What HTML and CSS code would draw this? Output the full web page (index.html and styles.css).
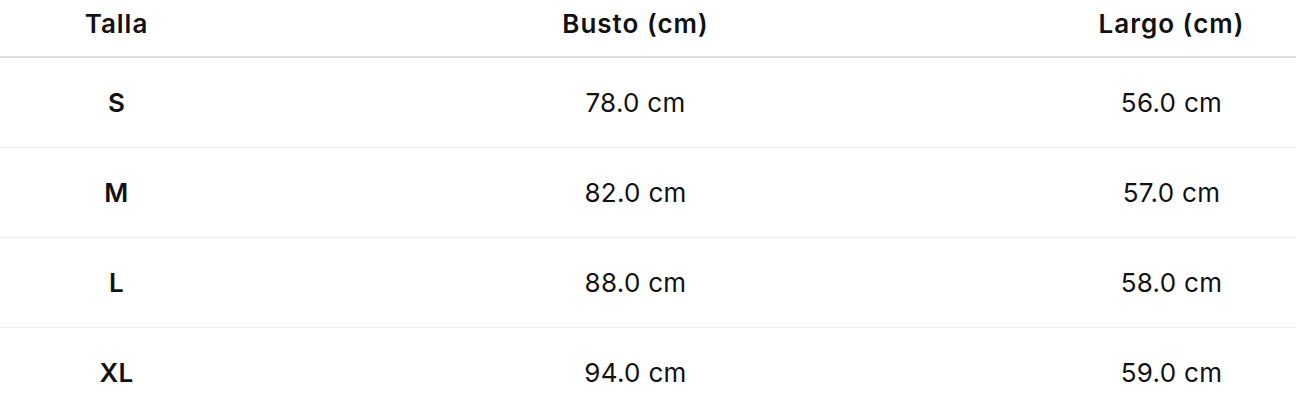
FILE: index.html
```html
<!DOCTYPE html>
<html lang="es">
<head>
<meta charset="utf-8">
<link rel="stylesheet" href="styles.css">
</head>
<body>
<div class="table">
  <div class="row head">
    <div class="cell c1">Talla</div>
    <div class="cell c2">Busto (cm)</div>
    <div class="cell c3">Largo (cm)</div>
  </div>
  <div class="row">
    <div class="cell c1 size">S</div>
    <div class="cell c2">78.0 cm</div>
    <div class="cell c3">56.0 cm</div>
  </div>
  <div class="row">
    <div class="cell c1 size">M</div>
    <div class="cell c2">82.0 cm</div>
    <div class="cell c3">57.0 cm</div>
  </div>
  <div class="row">
    <div class="cell c1 size">L</div>
    <div class="cell c2">88.0 cm</div>
    <div class="cell c3">58.0 cm</div>
  </div>
  <div class="row">
    <div class="cell c1 size">XL</div>
    <div class="cell c2">94.0 cm</div>
    <div class="cell c3">59.0 cm</div>
  </div>
</div>
</body>
</html>
```
FILE: styles.css
```css
html, body {
  margin: 0;
  padding: 0;
  background: #ffffff;
}
body {
  font-family: Inter, "Liberation Sans", sans-serif;
  color: #111111;
  font-size: 26px;
  letter-spacing: 0.3px;
}
.table {
  display: flex;
  flex-direction: column;
  width: 1296px;
}
.row {
  display: grid;
  grid-template-columns: 233px 805px 1fr;
  height: 89px;
  align-items: center;
  border-bottom: 1px solid #efefef;
}
.row.head {
  height: 58px;
  box-sizing: border-box;
  padding-bottom: 9px;
  border-bottom: 2px solid #dcdcdc;
  font-weight: 600;
  font-size: 26px;
  letter-spacing: 1px;
}
.cell {
  text-align: center;
}
.c3 {
  padding-left: 9px;
}
.size {
  font-weight: 600;
}
```
